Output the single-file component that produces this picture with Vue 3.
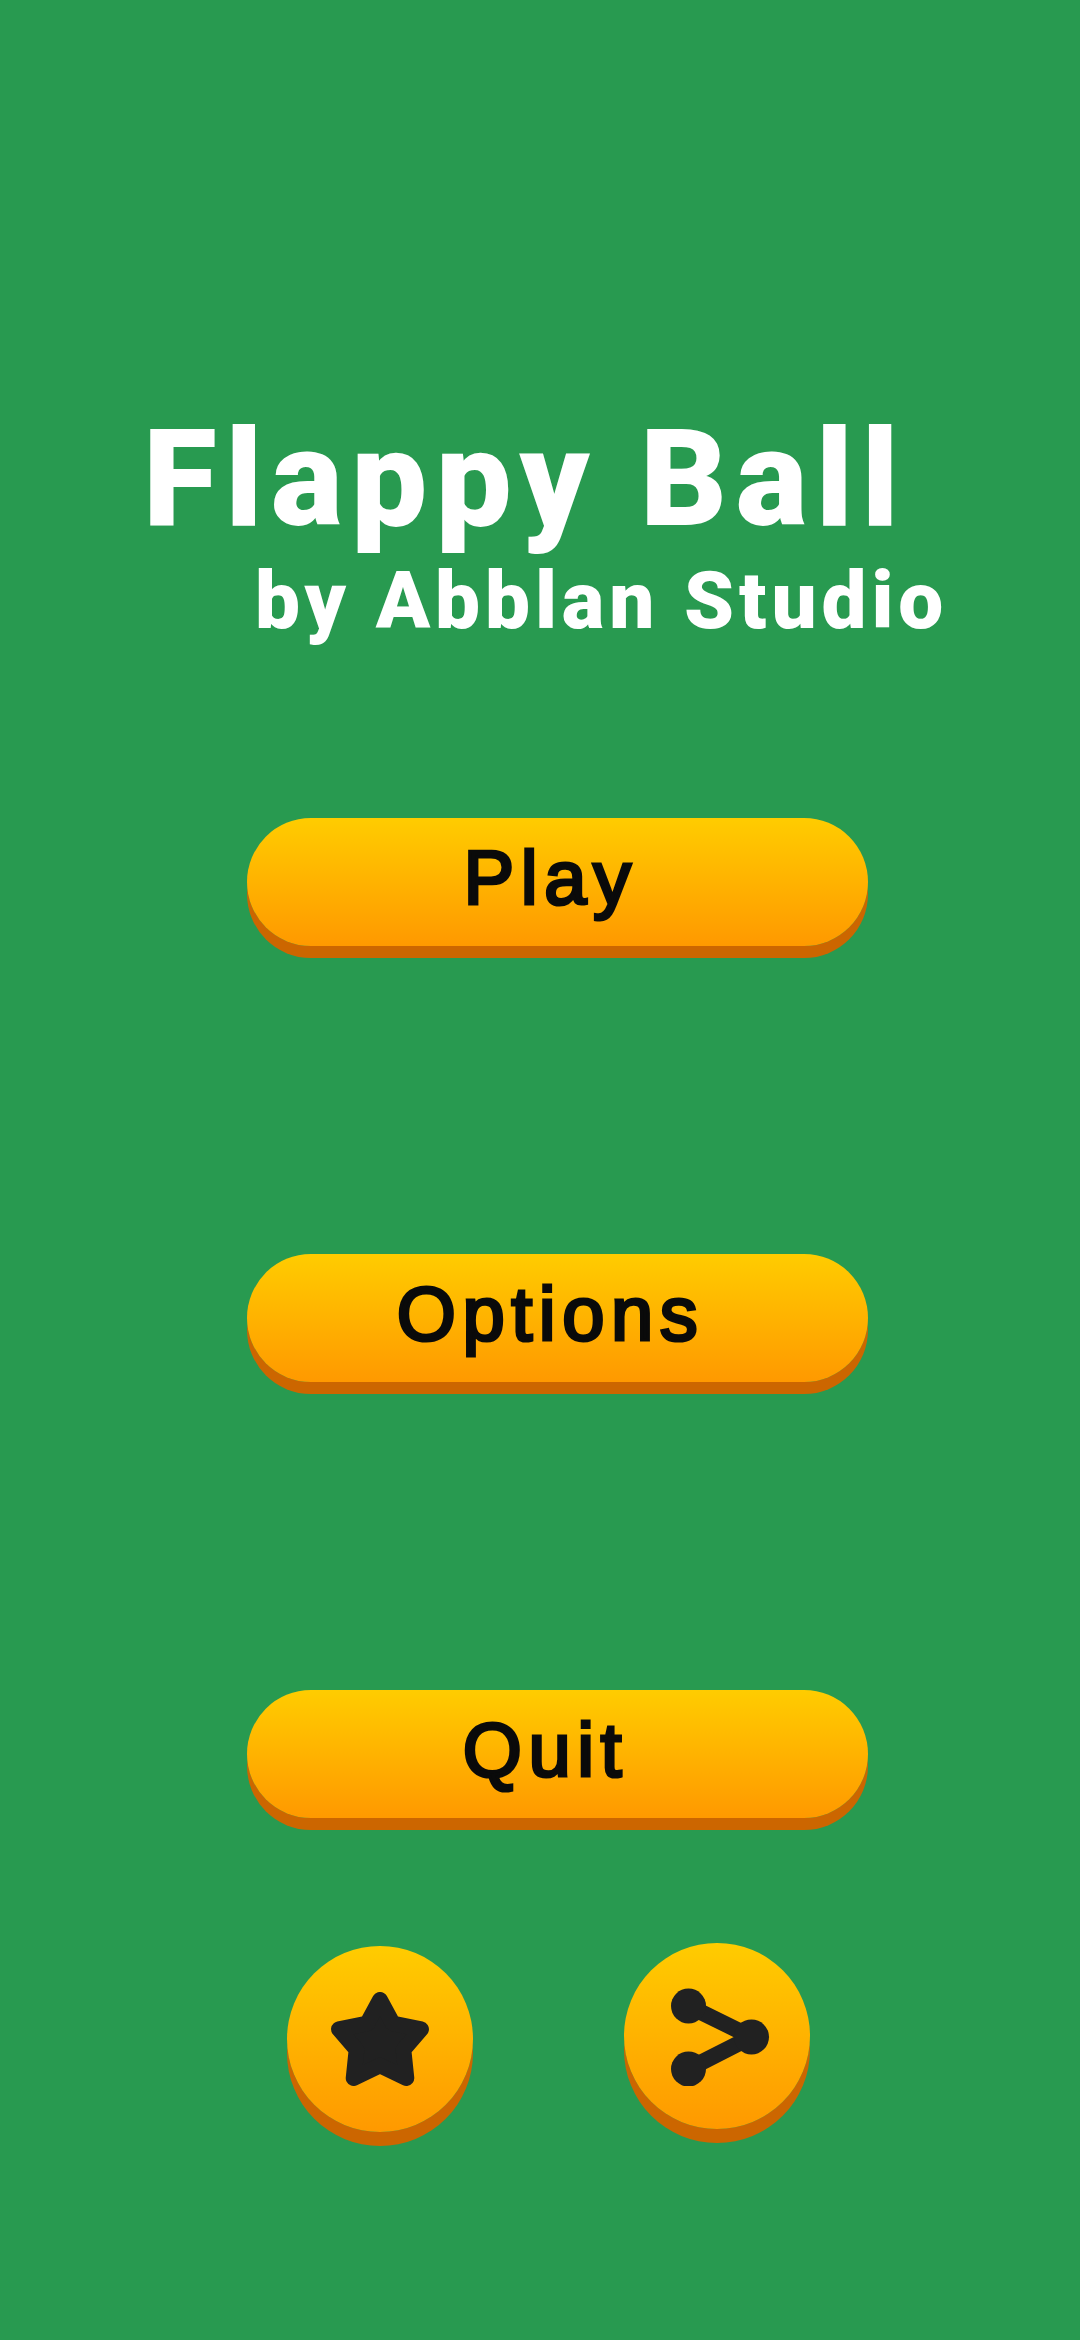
<script setup>
const menu = [
  { label: 'Play', cls: 'play' },
  { label: 'Options', cls: 'options' },
  { label: 'Quit', cls: 'quit' }
]
</script>

<template>
  <main class="screen">
    <h1 class="title">Flappy Ball</h1>
    <p class="studio">by Abblan Studio</p>

    <div class="menu">
      <button v-for="item in menu" :key="item.label" class="btn" :class="item.cls">{{ item.label }}</button>
    </div>

    <div class="round-row">
      <button class="round star">
        <svg width="98" height="94" viewBox="0 0 100 96">
          <polygon
            fill="#212121"
            stroke="#212121"
            stroke-width="16"
            stroke-linejoin="round"
            points="50,8 63,32 92,38 74,59 77,88 50,75 23,88 26,59 8,38 37,32"
          />
        </svg>
      </button>
      <button class="round share">
        <svg width="106" height="100" viewBox="0 0 106 100">
          <path fill="none" stroke="#212121" stroke-width="16" stroke-linejoin="miter" d="M24.5 20 L87.5 51 L24.5 83" />
          <circle cx="24.5" cy="20" r="17.5" fill="#212121" />
          <circle cx="87.5" cy="51" r="17.5" fill="#212121" />
          <circle cx="24.5" cy="83" r="17.5" fill="#212121" />
        </svg>
      </button>
    </div>
  </main>
</template>

<style>
body {
  background: #289a50;
}
</style>

<style scoped>
.screen {
  height: 2340px;
  padding-top: 405px;
  box-sizing: border-box;
  background: #289a50;
  overflow: hidden;
}
.title {
  margin: 0 0 0 143px;
  font: 900 135px/149px Roboto, sans-serif;
  letter-spacing: 8.5px;
  color: #fff;
  white-space: nowrap;
}
.studio {
  margin: 0 0 0 255px;
  font: 900 80px/94px Roboto, sans-serif;
  letter-spacing: 4.9px;
  color: #fff;
  white-space: nowrap;
}
.menu {
  display: flex;
  flex-direction: column;
  gap: 296px;
  margin: 170px 0 0 247px;
}
.btn {
  width: 621px;
  height: 128px;
  margin: 0 0 12px;
  padding: 0 14px 8px 0;
  border: 0;
  border-radius: 64px;
  background: linear-gradient(#ffcc00, #ff9900);
  box-shadow: 0 12px 0 #cc6600;
  font: 400 76px/1 "Liberation Sans", sans-serif;
  letter-spacing: 6.5px;
  -webkit-text-stroke: 3.2px #0a0a0a;
  color: #0a0a0a;
}
.quit {
  padding-right: 24px;
}
.round-row {
  display: flex;
  gap: 151px;
  margin: 116px 0 0 287px;
}
.round {
  display: flex;
  align-items: center;
  justify-content: center;
  width: 186px;
  height: 186px;
  padding: 0;
  border: 0;
  border-radius: 50%;
  background: linear-gradient(#ffcc00, #ff9900);
  box-shadow: 0 14px 0 #cc6600;
}
.share {
  margin-top: -3px;
}
</style>
